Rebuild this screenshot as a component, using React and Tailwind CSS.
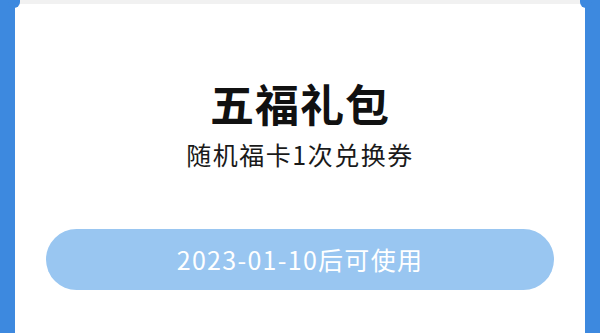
export default function App() {
  return (
    <div
      className="relative flex h-[333px] w-[600px] overflow-hidden bg-[#3d89df]"
      style={{ fontFamily: '"Noto Sans CJK SC", "Noto Sans", sans-serif' }}
    >
      {/* corner bumps */}
      <div className="absolute left-[8px] top-[-6px] h-[14px] w-[12px] rounded-full bg-[#3d89df]" />
      <div className="absolute right-[8px] top-[-6px] h-[14px] w-[12px] rounded-full bg-[#3d89df]" />

      <div className="ml-[15px] mr-[15px] flex flex-1 flex-col">
        <div className="h-[4px] bg-[#f1f1f1]" />
        <div className="flex flex-1 flex-col items-center bg-white">
          <h1 className="mt-[71px] text-[44px] font-bold leading-[56px] tracking-[1px] text-[#111]">
            五福礼包
          </h1>
          <p className="mt-[6px] text-[25px] leading-[34px] tracking-[1.5px] text-[#1a1a1a]">随机福卡1次兑换券</p>
          <button className="mt-[58px] flex h-[61px] w-[508px] items-center justify-center rounded-full bg-[#99c6f1] text-[25px] tracking-[1.3px] text-white">
            2023-01-10后可使用
          </button>
        </div>
      </div>
    </div>
  );
}
